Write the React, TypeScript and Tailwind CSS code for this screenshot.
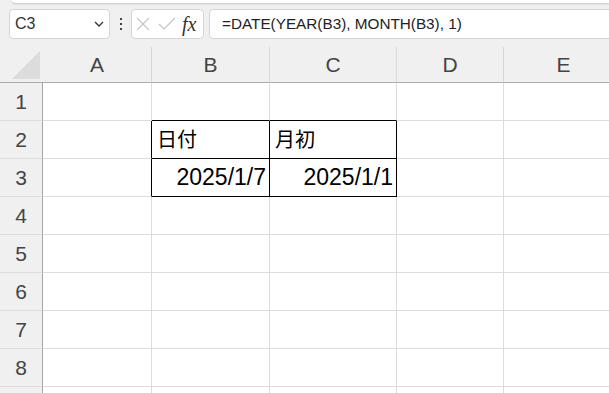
import React from "react";

const COLS = ["A", "B", "C", "D", "E"];
const ROWS = [1, 2, 3, 4, 5, 6, 7, 8, 9];

const cellText: Record<string, { text: string; align: "left" | "right"; jp?: boolean }> = {
  B2: { text: "日付", align: "left", jp: true },
  C2: { text: "月初", align: "left", jp: true },
  B3: { text: "2025/1/7", align: "right" },
  C3: { text: "2025/1/1", align: "right" },
};

// cells whose right / bottom edge is part of the B2:C3 outline
const blackRight = new Set(["A2", "A3", "B2", "B3", "C2", "C3"]);
const blackBottom = new Set(["B1", "C1", "B2", "C2", "B3", "C3"]);

function FormulaBar() {
  return (
    <div className="mt-[6px] flex h-[30px] items-stretch pl-[9px]">
      <div className="flex w-[101px] shrink-0 items-center justify-between rounded-[4px] border border-[#d6d6d6] bg-white pl-[5px] pr-[5px]">
        <span className="text-[16px] text-[#333]">C3</span>
        <svg width="10" height="6" viewBox="0 0 10 6" fill="none">
          <path d="M1 1 L5 5 L9 1" stroke="#333" strokeWidth="1.3" />
        </svg>
      </div>
      <div className="flex w-[21px] shrink-0 flex-col items-center justify-center gap-[3px]">
        <span className="h-[2px] w-[2px] bg-[#444]" />
        <span className="h-[2px] w-[2px] bg-[#444]" />
        <span className="h-[2px] w-[2px] bg-[#444]" />
      </div>
      <div className="flex w-[73px] shrink-0 items-center rounded-[4px] border border-[#d6d6d6] bg-white pl-[4px]">
        <svg width="14" height="14" viewBox="0 0 14 14" fill="none">
          <path d="M1 1 L13 13 M13 1 L1 13" stroke="#c4c4c4" strokeWidth="1.2" />
        </svg>
        <svg width="18" height="14" viewBox="0 0 18 14" fill="none" className="ml-[8px]">
          <path d="M1 7 L6 12 L17 1" stroke="#c4c4c4" strokeWidth="1.2" />
        </svg>
        <span className="ml-[6px] font-['Liberation_Serif',serif] text-[20px] italic leading-none text-[#333]">fx</span>
      </div>
      <div className="ml-[5px] flex w-[420px] shrink-0 items-center rounded-[4px] border border-[#d6d6d6] bg-white pl-[12px]">
        <span className="text-[15.3px] text-[#222]">=DATE(YEAR(B3), MONTH(B3), 1)</span>
      </div>
    </div>
  );
}

function Corner() {
  return (
    <div className="relative border-b border-[#ababab] bg-[#f0f0f0]">
      <svg width="28" height="28" viewBox="0 0 28 28" className="absolute left-[12px] top-[4px]">
        <polygon points="28,0 28,28 0,28" fill="#dcdcdc" />
      </svg>
    </div>
  );
}

export default function App() {
  return (
    <div className="relative h-[393px] w-[609px] overflow-hidden bg-[#f0f0f0] font-['Liberation_Sans','Noto_Sans_CJK_JP',sans-serif]">
      <div className="ml-[12px] h-[3px] rounded-bl-[3px] bg-white shadow-[0_1px_2px_rgba(0,0,0,0.18)]" />
      <FormulaBar />

      <div className="mt-[8px] grid grid-cols-[43px_109px_118px_127px_107px_120px] grid-rows-[36px_repeat(9,38px)]">
        <Corner />
        {COLS.map((c) => (
          <div
            key={c}
            className="flex items-center justify-center border-b border-r border-b-[#ababab] border-r-[#d8d8d8] bg-[#f0f0f0] text-[21px] text-[#444]"
          >
            {c}
          </div>
        ))}

        {ROWS.map((r) => (
          <React.Fragment key={r}>
            {/* row 9 is only a sliver at the bottom edge, its number falls below the window */}
            <div className="flex items-center justify-center border-b border-r border-b-[#dcdcdc] border-r-[#a6a6a6] bg-[#f0f0f0] text-[21px] text-[#444]">
              {r < 9 ? r : null}
            </div>
            {COLS.map((c) => {
              const id = `${c}${r}`;
              const t = cellText[id];
              const right = blackRight.has(id) ? "border-r-black" : "border-r-[#dcdcdc]";
              const bottom = blackBottom.has(id) ? "border-b-black" : "border-b-[#dcdcdc]";
              return (
                <div
                  key={id}
                  className={`flex items-center border-b border-r bg-white ${right} ${bottom} ${
                    t?.align === "right" ? "justify-end pr-[3px]" : "justify-start pl-[5px]"
                  }`}
                >
                  {t && (
                    <span className={t.jp ? "text-[20px] text-black" : "text-[23px] text-black"}>
                      {t.text}
                    </span>
                  )}
                </div>
              );
            })}
          </React.Fragment>
        ))}
      </div>
    </div>
  );
}
